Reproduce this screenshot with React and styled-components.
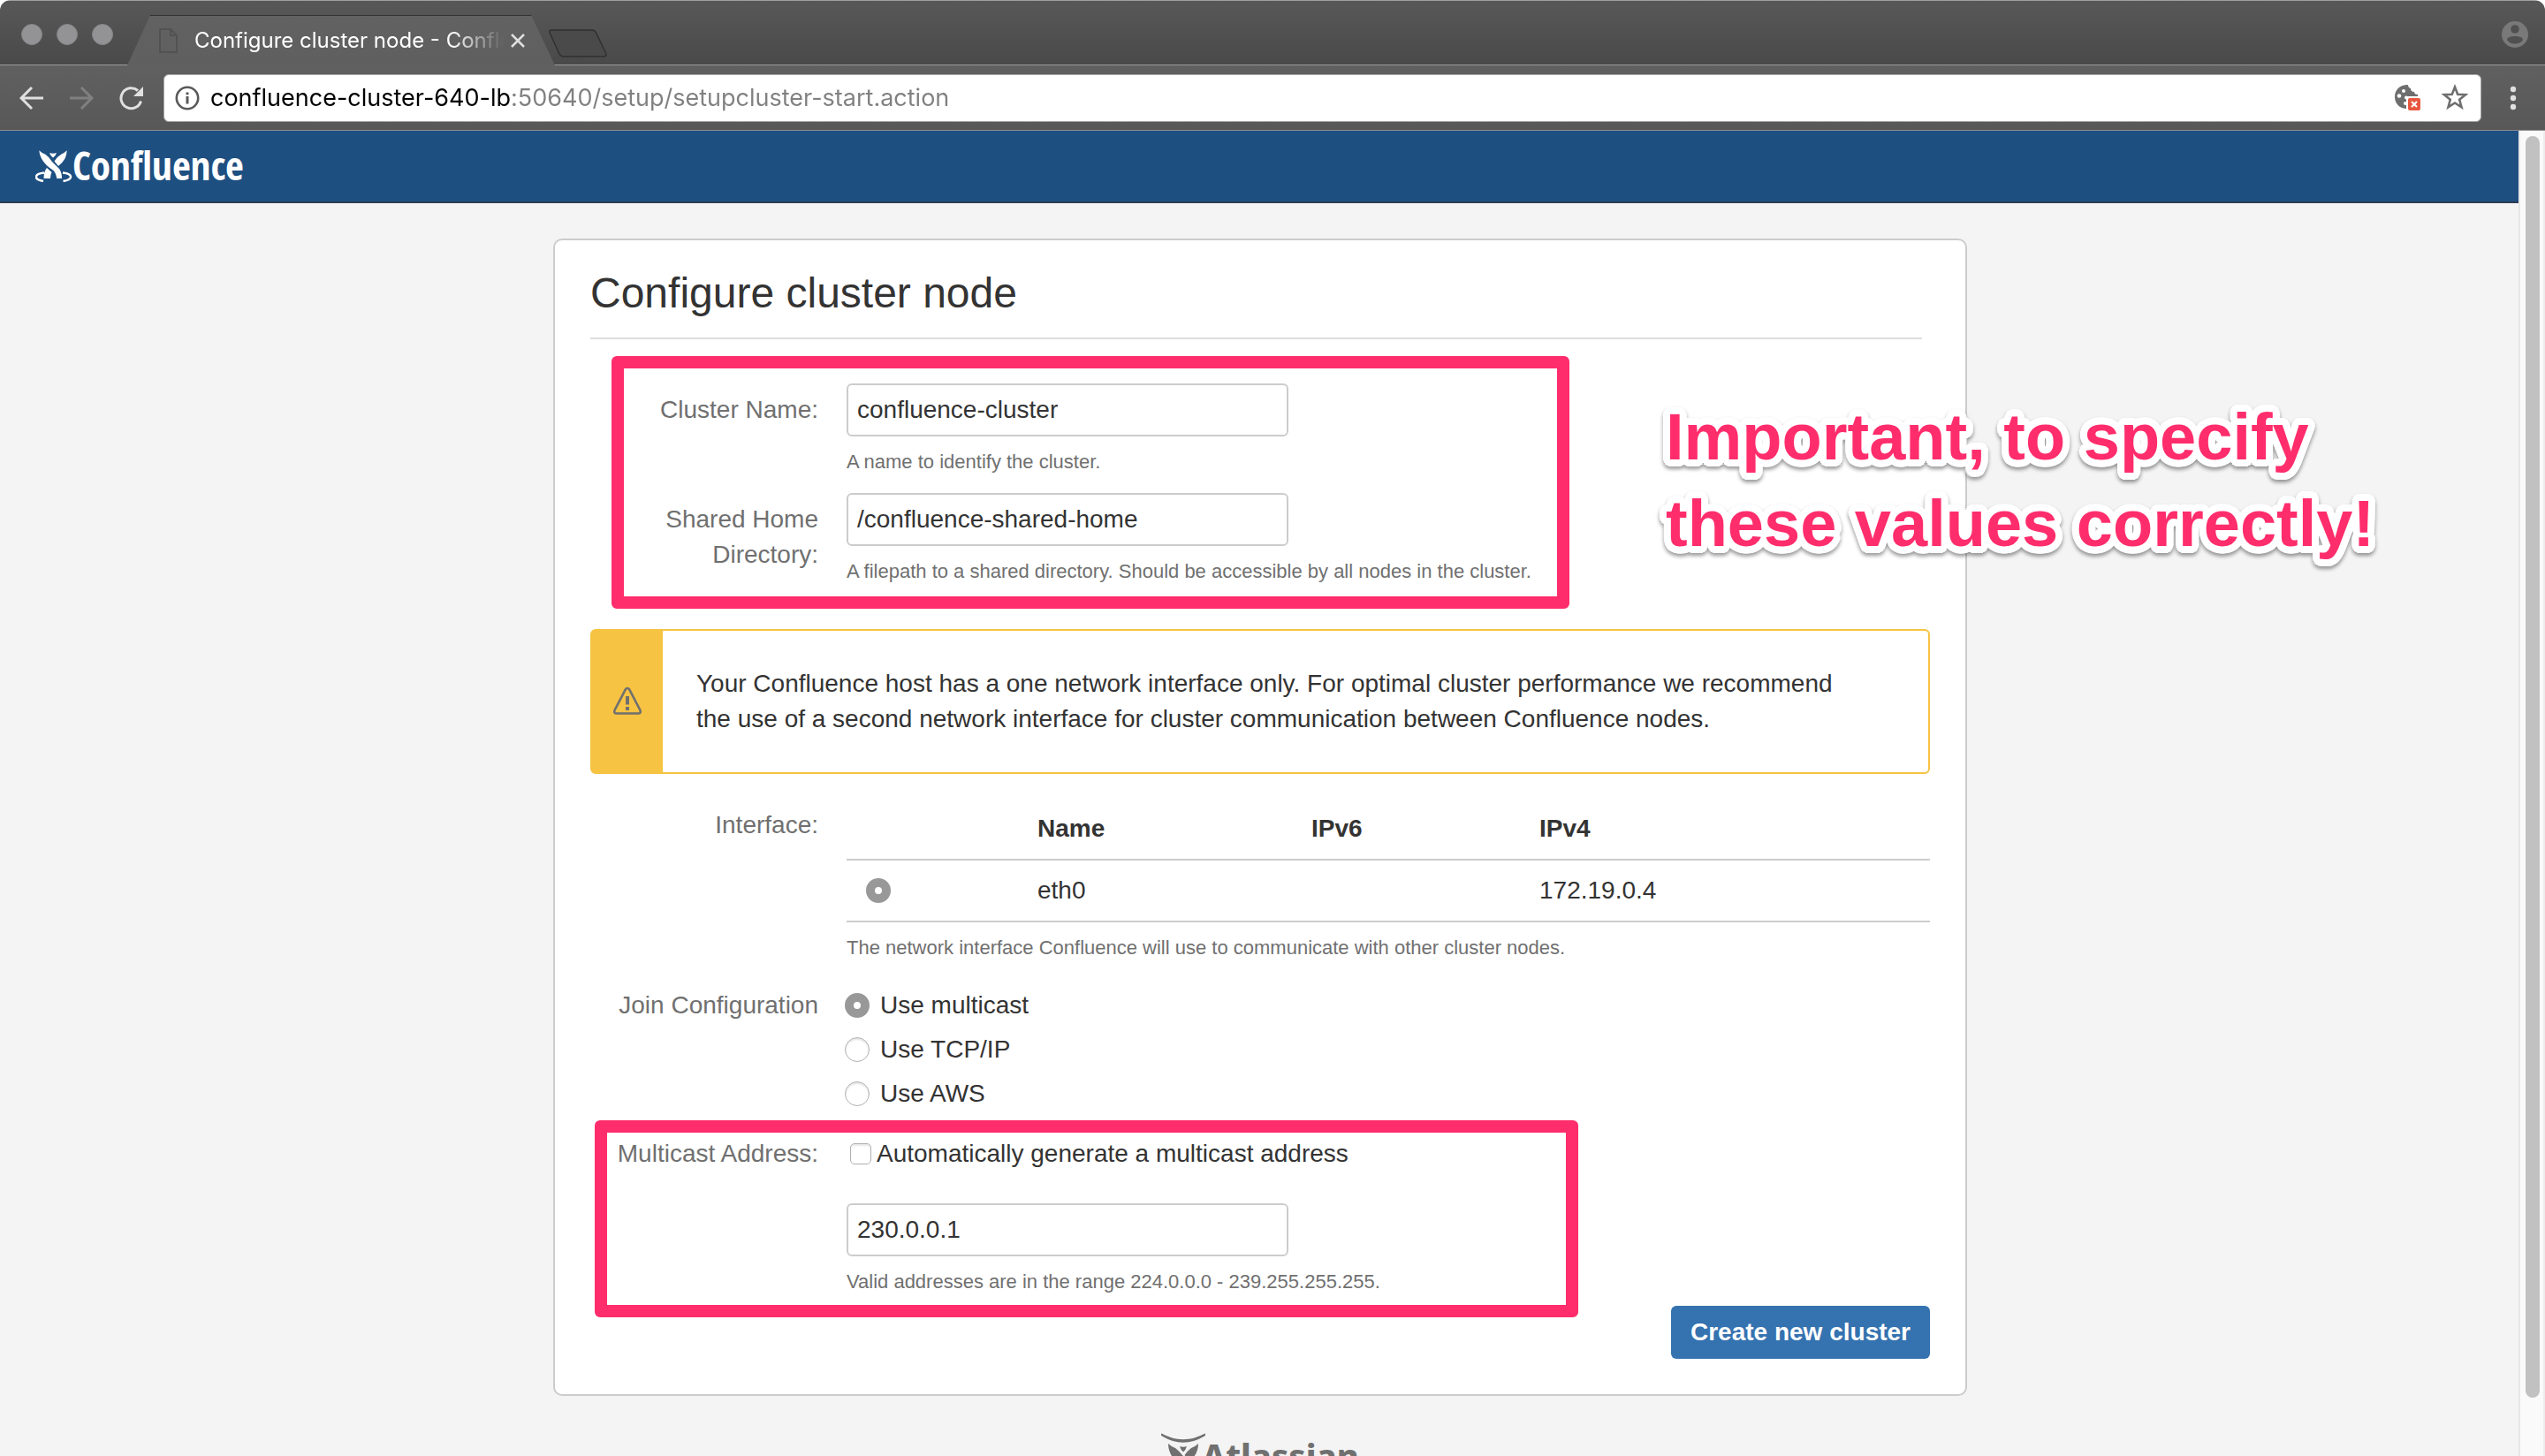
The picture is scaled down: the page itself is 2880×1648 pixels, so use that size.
import React, { useState } from "react";
import styled, { createGlobalStyle } from "styled-components";

const GlobalStyle = createGlobalStyle`
  * { box-sizing: border-box; }
  body {
    margin: 0;
    background: #fff;
    color: #333;
    font-family: "Liberation Sans", Arial, sans-serif;
    font-size: 28px;
    line-height: 40px;
  }
  button, input { font: inherit; color: inherit; }
`;

const PINK = "#ff2d6c";

/* White outline built from shadows placed on two rings round the glyphs. */
const outline = [4, 8]
  .flatMap((radius) =>
    Array.from({ length: 24 }, (_, i) => {
      const angle = (i * Math.PI) / 12;
      const x = (radius * Math.cos(angle)).toFixed(1);
      const y = (radius * Math.sin(angle)).toFixed(1);
      return `${x}px ${y}px 0 #fff`;
    })
  )
  .join(", ");

/* ---------- browser window ---------- */

const BrowserWindow = styled.div`
  display: flex;
  flex-direction: column;
  height: 100vh;
  overflow: hidden;
  border-radius: 12px 12px 0 0;
  background: #f4f4f4;
`;

const TabStrip = styled.div`
  display: flex;
  flex: none;
  align-items: flex-end;
  height: 74px;
  padding: 0 18px 0 24px;
  border-top: 1px solid #a0a0a0;
  background: linear-gradient(#585858, #494949);
  box-shadow: inset 0 -1px #9a9a9a;
`;

const WindowButtons = styled.div`
  display: flex;
  align-self: center;
  gap: 16px;
  margin-top: 2px;
`;

const WindowButton = styled.button`
  width: 24px;
  height: 24px;
  padding: 0;
  border: 1px solid #858587;
  border-radius: 50%;
  background: #939396;
`;

const Tab = styled.div`
  display: flex;
  align-items: center;
  width: 484px;
  height: 57px;
  margin-left: 16px;
  padding: 0 34px 0 36px;
  clip-path: polygon(0 100%, 26px 0, 457px 0, 100% 100%);
  background: linear-gradient(#626262, #5f5f5f);
  box-shadow: inset 0 1px #333;
  svg { flex: none; }
`;

const TabTitle = styled.span`
  flex: 1;
  overflow: hidden;
  margin-left: 18px;
  color: #fff;
  font-family: Inter, Roboto, sans-serif;
  font-size: 24px;
  line-height: 32px;
  white-space: nowrap;
  mask-image: linear-gradient(to right, #000 290px, transparent 350px);
`;

const IconButton = styled.button`
  display: flex;
  flex: none;
  padding: 0;
  border: 0;
  background: none;
`;

const NewTabButton = styled(IconButton)`
  margin: 0 auto 8px -8px;
`;

const ProfileButton = styled(IconButton)`
  align-self: center;
  margin-top: 2px;
`;

const Toolbar = styled.div`
  display: flex;
  flex: none;
  align-items: center;
  height: 74px;
  padding: 0 32px 0 22px;
  border-bottom: 1px solid #8d8d8d;
  background: linear-gradient(#606060, #585858);
`;

const NavButtons = styled.div`
  display: flex;
  gap: 28px;
  margin-right: 22px;
`;

const AddressBar = styled.div`
  display: flex;
  flex: 1;
  align-items: center;
  height: 54px;
  margin-right: 32px;
  padding: 0 14px 0 12px;
  border: 1px solid #a8a8a8;
  border-radius: 6px;
  background: #fff;
`;

const AddressInput = styled.input`
  flex: 1;
  min-width: 0;
  height: 40px;
  margin: 0 12px;
  padding: 0;
  border: 0;
  outline: 0;
  background: linear-gradient(to right, #000 342px, #808080 342px) text;
  color: transparent;
  font-family: Inter, Roboto, sans-serif;
  font-size: 27px;
`;

const AddressActions = styled.div`
  display: flex;
  gap: 22px;
`;

/* ---------- page ---------- */

const Viewport = styled.div`
  display: flex;
  flex: 1;
  min-height: 0;
`;

const Page = styled.div`
  flex: 1;
  overflow: hidden;
`;

const Content = styled.div`
  padding: 40px 0 0 2px;
`;

const ScrollTrack = styled.div`
  flex: none;
  width: 30px;
  padding: 6px 4px 66px 6px;
  border-left: 2px solid #e7e7e7;
  border-right: 2px solid #ededed;
  background: #fafafa;
`;

const ScrollThumb = styled.div`
  width: 16px;
  height: 100%;
  border-radius: 8px;
  background: #c1c1c1;
`;

const Header = styled.header`
  display: flex;
  align-items: center;
  height: 82px;
  padding: 0 40px 2px;
  border-bottom: 2px solid #2e3d54;
  background: #1e4f81;
`;

const HomeLink = styled.a`
  display: flex;
  align-items: center;
  color: #fff;
  font-family: "Liberation Sans Narrow", "Open Sans Condensed", "DejaVu Sans Condensed", sans-serif;
  font-size: 45px;
  font-weight: 700;
  text-decoration: none;
`;

const Card = styled.main`
  position: relative;
  max-width: 1600px;
  margin: 0 auto 42px;
  padding: 32px 40px 40px;
  border: 2px solid #ccc;
  border-radius: 10px;
  background: #fff;
`;

const Title = styled.h1`
  margin: 0 9px 50px 0;
  padding-bottom: 22px;
  border-bottom: 2px solid #ddd;
  font-size: 48px;
  font-weight: 400;
  line-height: 56px;
`;

const FieldGroup = styled.div`
  position: relative;
  display: flex;
  flex-direction: column;
  gap: 20px;
`;

const Highlight = styled.div`
  position: absolute;
  top: ${(p) => p.$top}px;
  bottom: ${(p) => p.$bottom}px;
  left: ${(p) => p.$left}px;
  width: ${(p) => p.$width}px;
  pointer-events: none;
  border: 14px solid ${PINK};
  border-radius: 6px;
`;

const Field = styled.div`
  display: grid;
  grid-template-columns: 258px 1fr;
  column-gap: 32px;
  margin-top: ${(p) => p.$space || 0}px;
`;

const FieldLabel = styled.label`
  padding-top: ${(p) => (p.$flush ? 0 : 10)}px;
  color: #707070;
  text-align: right;
`;

const TextInput = styled.input`
  display: block;
  width: 500px;
  height: 60px;
  padding: 0 10px;
  border: 2px solid #ccc;
  border-radius: 6px;
  background: #fff;
`;

const Description = styled.p`
  margin: 14px 0 0;
  color: #707070;
  font-size: 22px;
  line-height: 30px;
`;

const Warning = styled.div`
  display: flex;
  margin: 50px 0 28px;
  border: 2px solid #f6c342;
  border-radius: 6px;
  background: #fff;
`;

const WarningIcon = styled.div`
  display: flex;
  flex: none;
  align-items: center;
  justify-content: center;
  width: 80px;
  background: #f6c342;
`;

const WarningText = styled.p`
  max-width: 1380px;
  margin: 0;
  padding: 40px 38px;
`;

const Table = styled.table`
  width: 100%;
  border-collapse: separate;
  border-spacing: 0;
  table-layout: fixed;
`;

const Cell = styled.td`
  width: ${(p) => p.$width || "auto"};
  padding: 14px 22px;
  border-bottom: 2px solid #ccc;
  text-align: left;
`;

const Radio = styled.input`
  display: block;
  flex: none;
  appearance: none;
  width: 28px;
  height: 28px;
  margin: 0;
  border: 1px solid #b0b0b0;
  border-radius: 50%;
  background: #fff;
  box-shadow: inset 0 2px 2px #e4e4e4;
  &:checked {
    border: 10px solid #989898;
    box-shadow: none;
  }
`;

const Checkbox = styled.input`
  flex: none;
  appearance: none;
  width: 24px;
  height: 24px;
  margin: 0;
  border: 1px solid #b0b0b0;
  border-radius: 5px;
  background: #fff;
  box-shadow: inset 0 2px 2px #e8e8e8;
  &:checked { background: #989898; }
`;

const Options = styled.div`
  display: flex;
  flex-direction: column;
  gap: 10px;
`;

const Option = styled.label`
  display: flex;
  align-items: center;
  gap: 12px;
  margin-left: -2px;
`;

const CheckOption = styled.label`
  display: flex;
  align-items: center;
  gap: 6px;
  margin-bottom: 36px;
  padding-left: 4px;
`;

const Actions = styled.div`
  display: flex;
  justify-content: flex-end;
  margin-top: 12px;
`;

const PrimaryButton = styled.button`
  height: 60px;
  padding: 0 22px;
  border: 0;
  border-radius: 6px;
  background: #3572b0;
  color: #fff;
  font-weight: 700;
`;

const Callout = styled.div`
  position: absolute;
  top: 174px;
  left: 1257px;
  color: ${PINK};
  font-size: 74px;
  font-weight: 700;
  line-height: 98px;
  white-space: nowrap;
  text-shadow: ${outline};
  filter: drop-shadow(0 3px 2px rgba(0, 0, 0, 0.4));
`;

const Footer = styled.footer`
  display: flex;
  justify-content: center;
`;

const AtlassianLink = styled.a`
  display: flex;
  align-items: flex-start;
  color: #707070;
  font-family: "Noto Sans", "Open Sans", sans-serif;
  font-size: 38px;
  font-weight: 800;
  line-height: 50px;
  text-decoration: none;
  svg { margin-right: -4px; }
`;

/* ---------- icons ---------- */

const ConfluenceMark = () => (
  <svg width="42" height="40" viewBox="0 0 42 40" fill="#fff" aria-hidden="true">
    <path d="M4.300 3.200Q7 6 11 7.500Q15 10 18.500 15.500L27 24Q30 28 30 35H24Q24 30 20.500 26Q11 20 7 12.500Q4.500 8 4.300 3.200Z" />
    <path d="M35.700 3.200Q33 6 29.500 7.500Q25 10 21.500 15.500L26 21Q31 17 33.500 12.500Q35.500 8 35.700 3.200Z" />
    <path d="M16 6Q20 7.500 24 6Q23 9.500 20 11.500Q17 9.500 16 6Z" />
    <path d="M13 23L18.500 28Q17 31 17 35H9.500Q9.500 27 13 23Z" />
    <path d="M10 28.500C-2 30 -2 36 9 38M31 28.500C43 30 43 36 31.500 38" fill="none" stroke="#fff" strokeWidth="2.500" />
  </svg>
);

const AtlassianMark = () => (
  <svg width="50" height="52" viewBox="0 0 50 52" fill="#707070" aria-hidden="true">
    <path d="M.5 .5Q25 14 49.500 .5Q51 2 49 3.500Q25 18 1 3.500Q-1 2 .5 .5Z" />
    <path d="M8 12Q11 15 16 17Q20 20 24 25L36 38V50H28Q26 40 18 33Q8 24 8 12Z" />
    <path d="M42 12Q39 15 34 17Q30 20 26.500 25L32 32Q42 24 42 12Z" />
    <path d="M21 15Q25 16.500 29 15Q28 19 25 21.500Q22 19 21 15Z" />
  </svg>
);

const PageIcon = () => (
  <svg width="22" height="30" viewBox="0 0 22 30" fill="none" stroke="#525252" strokeWidth="2" aria-hidden="true">
    <path d="M1 2H13L20 9V28H1ZM13 2V9H20" />
  </svg>
);

const CloseIcon = () => (
  <svg width="16" height="16" viewBox="0 0 16 16" stroke="#dedede" strokeWidth="2.500" aria-hidden="true">
    <path d="M1 1L15 15M15 1L1 15" />
  </svg>
);

const NewTabShape = () => (
  <svg width="68" height="34" viewBox="0 0 68 34" fill="#4a4a4a" stroke="#303030" strokeWidth="1.500" aria-hidden="true">
    <path d="M4 2H50Q53 2 54.500 5L65.500 28Q67 32 63 32H18Q14.500 32 13 29L2 5Q1 2 4 2Z" />
  </svg>
);

const ProfileIcon = () => (
  <svg width="32" height="32" viewBox="0 0 32 32" aria-hidden="true">
    <circle cx="16" cy="16" r="15" fill="#797979" />
    <circle cx="16" cy="10" r="4.800" fill="#505050" />
    <path d="M7 22C7 16.500 25 16.500 25 22C22 28 10 28 7 22Z" fill="#505050" />
  </svg>
);

const ArrowIcon = ({ color, forward }) => (
  <svg width="28" height="28" viewBox="0 0 28 28" fill="none" stroke={color} strokeWidth="3" aria-hidden="true">
    <path d={forward ? "M1 14H26M14 2L26 14L14 26" : "M27 14H2M14 2L2 14L14 26"} />
  </svg>
);

const ReloadIcon = () => (
  <svg width="29" height="28" viewBox="0 0 29 28" aria-hidden="true">
    <path d="M25.500 17.500A11.500 11.500 0 1 1 22 5.500" fill="none" stroke="#e0e0e0" strokeWidth="3" />
    <path d="M28 1V12H17Z" fill="#e0e0e0" />
  </svg>
);

const InfoIcon = () => (
  <svg width="28" height="28" viewBox="0 0 28 28" aria-hidden="true">
    <circle cx="14" cy="14" r="12.200" fill="none" stroke="#5a5a5a" strokeWidth="2.600" />
    <path d="M14 12V20.500M14 7.500V10.300" stroke="#5a5a5a" strokeWidth="3" />
  </svg>
);

const CookieIcon = () => (
  <svg width="32" height="32" viewBox="0 0 32 32" aria-hidden="true">
    <path d="M16 1C6 1 1 7 1 14.500S6 28 15 28L27 15V12Q23 12 23 9Q19 9 19 5Q16 4 16 1Z" fill="#6e6e6e" />
    <g fill="#fff">
      <circle cx="11" cy="8" r="2" />
      <circle cx="6" cy="13.500" r="2.300" />
      <circle cx="14" cy="15.500" r="2" />
      <circle cx="13" cy="22" r="2" />
      <rect x="14" y="14" width="18" height="18" rx="1" />
    </g>
    <rect x="16" y="16" width="14" height="14" rx="2" fill="#e8573f" />
    <path d="M20 20L26 26M26 20L20 26" stroke="#fff" strokeWidth="2" />
  </svg>
);

const StarIcon = () => (
  <svg width="30" height="30" viewBox="0 0 30 30" fill="none" stroke="#6e6e6e" strokeWidth="2.600" aria-hidden="true">
    <path d="M15 3.500L18.200 11.700L27 12.200L20.200 17.800L22.500 26.300L15 21.500L7.500 26.300L9.800 17.800L3 12.200L11.800 11.700Z" />
  </svg>
);

const MenuIcon = () => (
  <svg width="8" height="28" viewBox="0 0 8 28" fill="#e0e0e0" aria-hidden="true">
    <circle cx="4" cy="4" r="3.200" />
    <circle cx="4" cy="14" r="3.200" />
    <circle cx="4" cy="24" r="3.200" />
  </svg>
);

const AlertIcon = () => (
  <svg width="34" height="34" viewBox="0 0 34 34" aria-hidden="true">
    <path d="M17 2Q18.500 2 19.200 3.300L31.500 27Q32.500 30.500 29.500 30.500H4.500Q1.500 30.500 2.500 27L14.800 3.300Q15.500 2 17 2Z" fill="none" stroke="#707070" strokeWidth="2.600" />
    <path d="M17 11V20.500M17 23V27" stroke="#707070" strokeWidth="4" />
  </svg>
);

/* ---------- app ---------- */

const JOIN_OPTIONS = [
  { id: "multicast", label: "Use multicast" },
  { id: "tcpip", label: "Use TCP/IP" },
  { id: "aws", label: "Use AWS" },
];

export default function App() {
  const [join, setJoin] = useState("multicast");

  return (
    <>
      <GlobalStyle />
      <BrowserWindow>
        <TabStrip>
          <WindowButtons>
            <WindowButton aria-label="Close window" />
            <WindowButton aria-label="Minimize window" />
            <WindowButton aria-label="Zoom window" />
          </WindowButtons>
          <Tab>
            <PageIcon />
            <TabTitle>Configure cluster node - Confluence</TabTitle>
            <IconButton aria-label="Close tab"><CloseIcon /></IconButton>
          </Tab>
          <NewTabButton aria-label="New tab"><NewTabShape /></NewTabButton>
          <ProfileButton aria-label="Profile"><ProfileIcon /></ProfileButton>
        </TabStrip>
        <Toolbar>
          <NavButtons>
            <IconButton aria-label="Back"><ArrowIcon color="#e0e0e0" /></IconButton>
            <IconButton aria-label="Forward"><ArrowIcon color="#808080" forward /></IconButton>
            <IconButton aria-label="Reload"><ReloadIcon /></IconButton>
          </NavButtons>
          <AddressBar>
            <InfoIcon />
            <AddressInput
              aria-label="Address"
              spellCheck={false}
              defaultValue="confluence-cluster-640-lb:50640/setup/setupcluster-start.action"
            />
            <AddressActions>
              <IconButton aria-label="Cookies blocked"><CookieIcon /></IconButton>
              <IconButton aria-label="Bookmark"><StarIcon /></IconButton>
            </AddressActions>
          </AddressBar>
          <IconButton aria-label="Menu"><MenuIcon /></IconButton>
        </Toolbar>

        <Viewport>
          <Page>
            <Header>
              <HomeLink href="#"><ConfluenceMark />Confluence</HomeLink>
            </Header>

            <Content>
              <Card>
                <Title>Configure cluster node</Title>

                <FieldGroup>
                  <Field>
                    <FieldLabel htmlFor="cluster-name">Cluster Name:</FieldLabel>
                    <div>
                      <TextInput id="cluster-name" defaultValue="confluence-cluster" />
                      <Description>A name to identify the cluster.</Description>
                    </div>
                  </Field>
                  <Field>
                    <FieldLabel htmlFor="shared-home">Shared Home Directory:</FieldLabel>
                    <div>
                      <TextInput id="shared-home" defaultValue="/confluence-shared-home" />
                      <Description>
                        A filepath to a shared directory. Should be accessible by all nodes in the cluster.
                      </Description>
                    </div>
                  </Field>
                  <Highlight $top={-31} $bottom={-27} $left={24} $width={1084} />
                </FieldGroup>

                <Warning>
                  <WarningIcon><AlertIcon /></WarningIcon>
                  <WarningText>
                    Your Confluence host has a one network interface only. For optimal cluster performance we
                    recommend the use of a second network interface for cluster communication between
                    Confluence nodes.
                  </WarningText>
                </Warning>

                <Field>
                  <FieldLabel htmlFor="interface-eth0">Interface:</FieldLabel>
                  <div>
                    <Table>
                      <thead>
                        <tr>
                          <Cell as="th" $width="194px" />
                          <Cell as="th" $width="310px">Name</Cell>
                          <Cell as="th" $width="258px">IPv6</Cell>
                          <Cell as="th">IPv4</Cell>
                        </tr>
                      </thead>
                      <tbody>
                        <tr>
                          <Cell>
                            <Radio type="radio" id="interface-eth0" name="interface" defaultChecked />
                          </Cell>
                          <Cell>eth0</Cell>
                          <Cell />
                          <Cell>172.19.0.4</Cell>
                        </tr>
                      </tbody>
                    </Table>
                    <Description>
                      The network interface Confluence will use to communicate with other cluster nodes.
                    </Description>
                  </div>
                </Field>

                <Field $space={30}>
                  <FieldLabel as="span" id="join-label" $flush>Join Configuration</FieldLabel>
                  <Options role="radiogroup" aria-labelledby="join-label">
                    {JOIN_OPTIONS.map(({ id, label }) => (
                      <Option key={id}>
                        <Radio
                          type="radio"
                          name="join"
                          checked={join === id}
                          onChange={() => setJoin(id)}
                        />
                        {label}
                      </Option>
                    ))}
                  </Options>
                </Field>

                <FieldGroup>
                  <Field $space={28}>
                    <FieldLabel htmlFor="multicast-address" $flush>Multicast Address:</FieldLabel>
                    <div>
                      <CheckOption>
                        <Checkbox type="checkbox" />
                        Automatically generate a multicast address
                      </CheckOption>
                      <TextInput id="multicast-address" defaultValue="230.0.0.1" />
                      <Description>Valid addresses are in the range 224.0.0.0 - 239.255.255.255.</Description>
                    </div>
                  </Field>
                  <Highlight $top={10} $bottom={-25} $left={5} $width={1113} />
                </FieldGroup>

                <Actions>
                  <PrimaryButton>Create new cluster</PrimaryButton>
                </Actions>

                <Callout>
                  Important, to specify
                  <br />
                  these values correctly!
                </Callout>
              </Card>

              <Footer>
                <AtlassianLink href="#"><AtlassianMark />Atlassian</AtlassianLink>
              </Footer>
            </Content>
          </Page>
          <ScrollTrack><ScrollThumb /></ScrollTrack>
        </Viewport>
      </BrowserWindow>
    </>
  );
}
